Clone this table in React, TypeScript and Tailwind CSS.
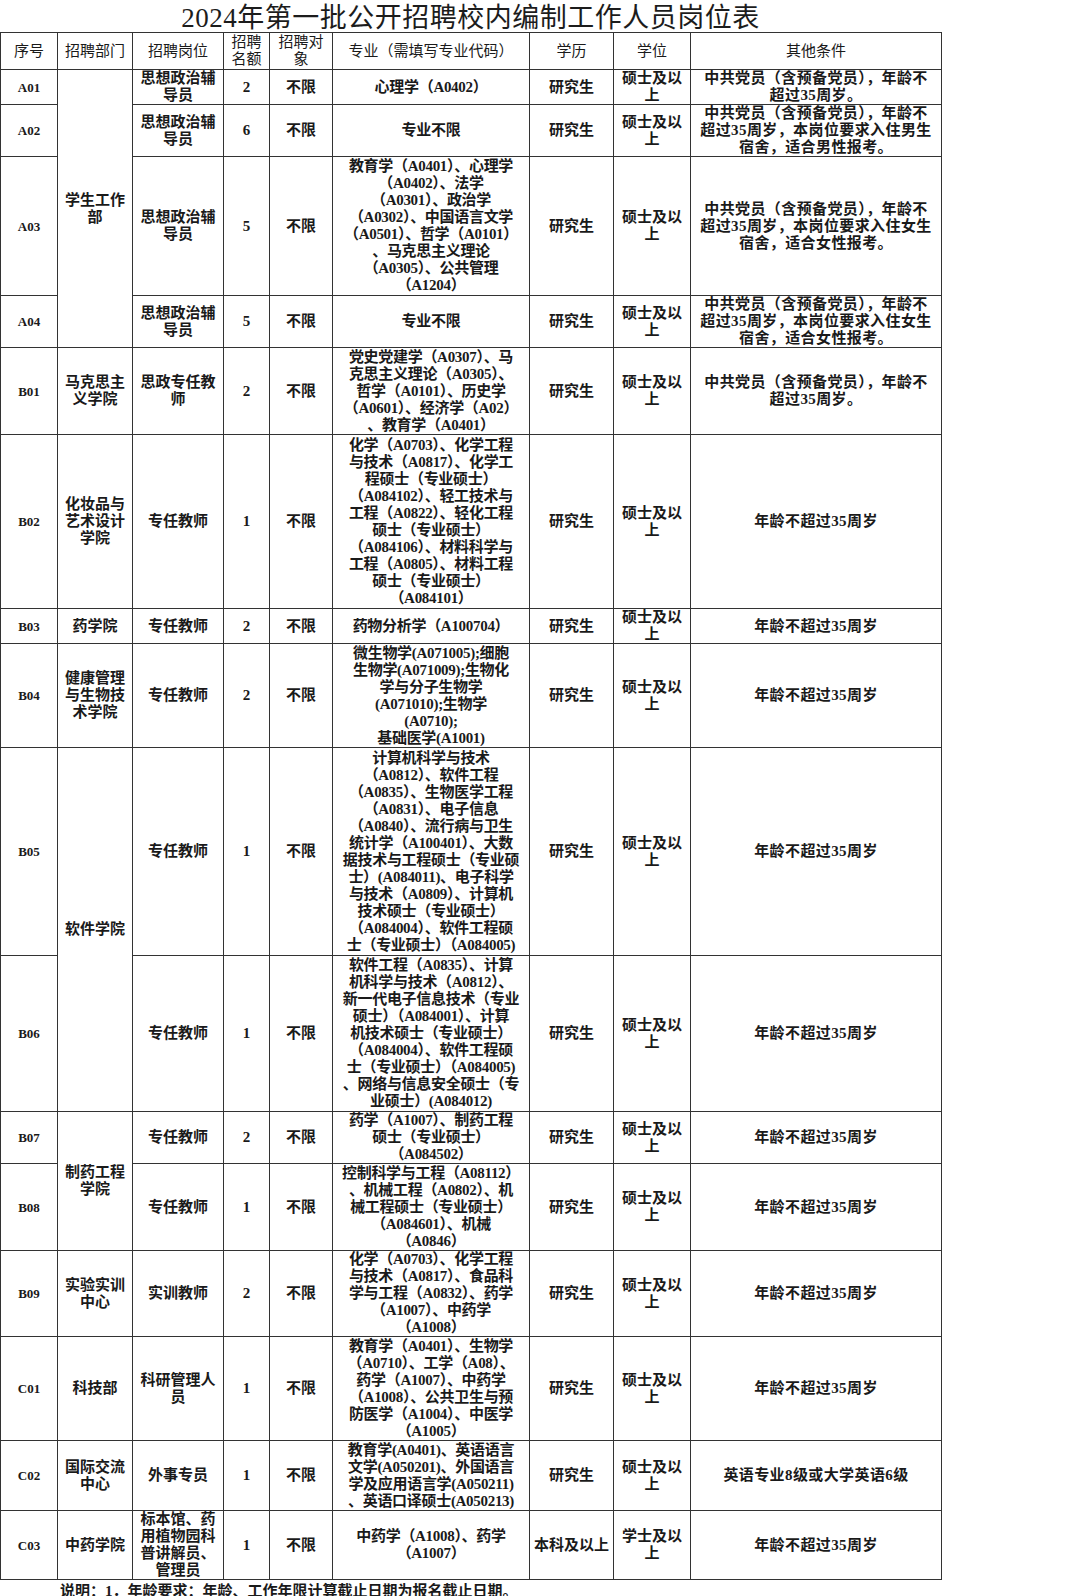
const cjk = "font-['Liberation_Serif','Noto_Sans_CJK_SC',serif]";

type Row = {
  id: string;
  dept?: string;
  deptSpan?: number;
  post: string;
  num: string;
  major: string;
  edu: string;
  degree: string;
  other: string;
  h: string;
};

const PARTY = "中共党员（含预备党员），年龄不\n超过35周岁。";
const AGE = "年龄不超过35周岁";
const MASTER = "硕士及以\n上";
const TUTOR = "思想政治辅\n导员";
const TEACHER = "专任教师";

const rows: Row[] = [
  { id: "A01", dept: "学生工作\n部", deptSpan: 4, post: TUTOR, num: "2", major: "心理学（A0402）", edu: "研究生", degree: MASTER, other: PARTY, h: "h-[35px]" },
  { id: "A02", post: TUTOR, num: "6", major: "专业不限", edu: "研究生", degree: MASTER, other: "中共党员（含预备党员），年龄不\n超过35周岁，本岗位要求入住男生\n宿舍，适合男性报考。", h: "h-[52px]" },
  {
    id: "A03",
    post: TUTOR,
    num: "5",
    major: "教育学（A0401）、心理学\n（A0402）、法学\n（A0301）、政治学\n（A0302）、中国语言文学\n（A0501）、哲学（A0101）\n、马克思主义理论\n（A0305）、公共管理\n（A1204）",
    edu: "研究生",
    degree: MASTER,
    other: "中共党员（含预备党员），年龄不\n超过35周岁，本岗位要求入住女生\n宿舍，适合女性报考。",
    h: "h-[139px]",
  },
  { id: "A04", post: TUTOR, num: "5", major: "专业不限", edu: "研究生", degree: MASTER, other: "中共党员（含预备党员），年龄不\n超过35周岁，本岗位要求入住女生\n宿舍，适合女性报考。", h: "h-[51px]" },
  {
    id: "B01",
    dept: "马克思主\n义学院",
    post: "思政专任教\n师",
    num: "2",
    major: "党史党建学（A0307）、马\n克思主义理论（A0305）、\n哲学（A0101）、历史学\n（A0601）、经济学（A02）\n、教育学（A0401）",
    edu: "研究生",
    degree: MASTER,
    other: PARTY,
    h: "h-[87px]",
  },
  {
    id: "B02",
    dept: "化妆品与\n艺术设计\n学院",
    post: TEACHER,
    num: "1",
    major: "化学（A0703）、化学工程\n与技术（A0817）、化学工\n程硕士（专业硕士）\n（A084102）、轻工技术与\n工程（A0822）、轻化工程\n硕士（专业硕士）\n（A084106）、材料科学与\n工程（A0805）、材料工程\n硕士（专业硕士）\n（A084101）",
    edu: "研究生",
    degree: MASTER,
    other: AGE,
    h: "h-[174px]",
  },
  { id: "B03", dept: "药学院", post: TEACHER, num: "2", major: "药物分析学（A100704）", edu: "研究生", degree: MASTER, other: AGE, h: "h-[34px]" },
  {
    id: "B04",
    dept: "健康管理\n与生物技\n术学院",
    post: TEACHER,
    num: "2",
    major: "微生物学(A071005);细胞\n生物学(A071009);生物化\n学与分子生物学\n(A071010);生物学\n(A0710);\n基础医学(A1001)",
    edu: "研究生",
    degree: MASTER,
    other: AGE,
    h: "h-[104px]",
  },
  {
    id: "B05",
    dept: "软件学院",
    deptSpan: 2,
    post: TEACHER,
    num: "1",
    major: "计算机科学与技术\n（A0812）、软件工程\n（A0835）、生物医学工程\n（A0831）、电子信息\n（A0840）、流行病与卫生\n统计学（A100401）、大数\n据技术与工程硕士（专业硕\n士）(A084011)、电子科学\n与技术（A0809）、计算机\n技术硕士（专业硕士）\n（A084004）、软件工程硕\n士（专业硕士）（A084005)",
    edu: "研究生",
    degree: MASTER,
    other: AGE,
    h: "h-[208px]",
  },
  {
    id: "B06",
    post: TEACHER,
    num: "1",
    major: "软件工程（A0835）、计算\n机科学与技术（A0812）、\n新一代电子信息技术（专业\n硕士）（A084001）、计算\n机技术硕士（专业硕士）\n（A084004）、软件工程硕\n士（专业硕士）（A084005)\n、网络与信息安全硕士（专\n业硕士）(A084012)",
    edu: "研究生",
    degree: MASTER,
    other: AGE,
    h: "h-[156px]",
  },
  {
    id: "B07",
    dept: "制药工程\n学院",
    deptSpan: 2,
    post: TEACHER,
    num: "2",
    major: "药学（A1007）、制药工程\n硕士（专业硕士）\n（A084502）",
    edu: "研究生",
    degree: MASTER,
    other: AGE,
    h: "h-[52px]",
  },
  {
    id: "B08",
    post: TEACHER,
    num: "1",
    major: "控制科学与工程（A08112）\n、机械工程（A0802）、机\n械工程硕士（专业硕士）\n（A084601）、机械\n（A0846）",
    edu: "研究生",
    degree: MASTER,
    other: AGE,
    h: "h-[87px]",
  },
  {
    id: "B09",
    dept: "实验实训\n中心",
    post: "实训教师",
    num: "2",
    major: "化学（A0703）、化学工程\n与技术（A0817）、食品科\n学与工程（A0832）、药学\n（A1007）、中药学\n（A1008）",
    edu: "研究生",
    degree: MASTER,
    other: AGE,
    h: "h-[86px]",
  },
  {
    id: "C01",
    dept: "科技部",
    post: "科研管理人\n员",
    num: "1",
    major: "教育学（A0401）、生物学\n（A0710）、工学（A08）、\n药学（A1007）、中药学\n（A1008）、公共卫生与预\n防医学（A1004）、中医学\n（A1005）",
    edu: "研究生",
    degree: MASTER,
    other: AGE,
    h: "h-[104px]",
  },
  {
    id: "C02",
    dept: "国际交流\n中心",
    post: "外事专员",
    num: "1",
    major: "教育学(A0401)、英语语言\n文学(A050201)、外国语言\n学及应用语言学(A050211)\n、英语口译硕士(A050213)",
    edu: "研究生",
    degree: MASTER,
    other: "英语专业8级或大学英语6级",
    h: "h-[70px]",
  },
  {
    id: "C03",
    dept: "中药学院",
    post: "标本馆、药\n用植物园科\n普讲解员、\n管理员",
    num: "1",
    major: "中药学（A1008）、药学\n（A1007）",
    edu: "本科及以上",
    degree: "学士及以\n上",
    other: AGE,
    h: "h-[69px]",
  },
];

const td = "border-[1.5px] border-[#333333] p-0 text-center align-middle whitespace-pre-line";

export default function App() {
  return (
    <div className={`min-h-[1596px] w-[1080px] bg-white text-[#1a1a1a] ${cjk}`}>
      <h1 className="h-[32px] w-[941px] pt-[3px] text-center text-[27px] leading-[30px] font-normal tracking-[0.5px] text-[#1c1c1c]">
        2024年第一批公开招聘校内编制工作人员岗位表
      </h1>
      <table className="w-[941px] table-fixed border-collapse text-[15px] leading-[17px] font-semibold">
        <colgroup>
          <col className="w-[57px]" />
          <col className="w-[75px]" />
          <col className="w-[91px]" />
          <col className="w-[46px]" />
          <col className="w-[63px]" />
          <col className="w-[197px]" />
          <col className="w-[84px]" />
          <col className="w-[77px]" />
          <col className="w-[251px]" />
        </colgroup>
        <thead>
          <tr className="h-[37px] text-[15px] leading-[17px]">
            <th className={`${td} font-normal`}>序号</th>
            <th className={`${td} font-normal`}>招聘部门</th>
            <th className={`${td} font-normal`}>招聘岗位</th>
            <th className={`${td} font-normal`}>{"招聘\n名额"}</th>
            <th className={`${td} font-normal`}>{"招聘对\n象"}</th>
            <th className={`${td} font-normal`}>专业（需填写专业代码）</th>
            <th className={`${td} font-normal`}>学历</th>
            <th className={`${td} font-normal`}>学位</th>
            <th className={`${td} font-normal`}>其他条件</th>
          </tr>
        </thead>
        <tbody>
          {rows.map((r) => (
            <tr key={r.id} className={r.h}>
              <td className={`${td} font-bold text-[13px]`}>{r.id}</td>
              {r.dept !== undefined && (
                <td className={td} rowSpan={r.deptSpan ?? 1}>
                  {r.dept}
                </td>
              )}
              <td className={td}>{r.post}</td>
              <td className={`${td} font-bold`}>{r.num}</td>
              <td className={td}>不限</td>
              <td className={`${td} whitespace-pre tracking-[-0.3px]`}>{r.major}</td>
              <td className={td}>{r.edu}</td>
              <td className={td}>{r.degree}</td>
              <td className={`${td} tracking-[0.4px]`}>{r.other}</td>
            </tr>
          ))}
        </tbody>
      </table>
      <p className="pl-[60px] pt-[2px] text-[15px] leading-[18px] font-semibold">
        说明：1．年龄要求：年龄、工作年限计算截止日期为报名截止日期。
      </p>
    </div>
  );
}
